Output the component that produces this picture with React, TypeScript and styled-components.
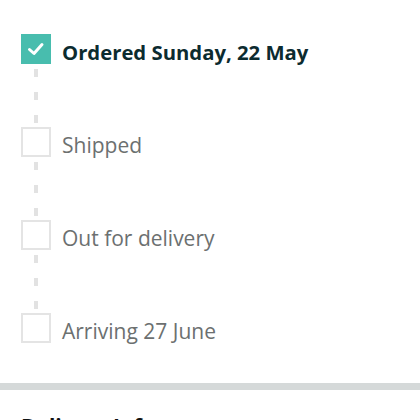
import styled, { createGlobalStyle } from "styled-components";

const GlobalStyle = createGlobalStyle`
  html, body {
    margin: 0;
    padding: 0;
    background: #ffffff;
    font-family: "Open Sans", "Noto Sans", Arial, sans-serif;
  }
`;

const Page = styled.div`
  width: 420px;
  height: 420px;
  overflow: hidden;
`;

const Timeline = styled.div`
  display: flex;
  flex-direction: column;
  padding: 34px 0 40px 21px;
`;

const Step = styled.div`
  display: flex;
  align-items: center;
  gap: 11px;
  height: 30px;
`;

const Box = styled.div<{ $done?: boolean }>`
  box-sizing: border-box;
  width: 30px;
  height: 30px;
  flex: none;
  display: flex;
  align-items: center;
  justify-content: center;
  background: ${(p) => (p.$done ? "#48bdae" : "#ffffff")};
  border: ${(p) => (p.$done ? "none" : "2px solid #e4e4e4")};
`;

const Label = styled.span<{ $done?: boolean }>`
  font-size: ${(p) => (p.$done ? "20.3px" : "21px")};
  font-weight: ${(p) => (p.$done ? 700 : 400)};
  color: ${(p) => (p.$done ? "#0c2b2f" : "#6c7070")};
  white-space: nowrap;
  margin-top: 6px;
`;

const Connector = styled.div`
  width: 4px;
  height: 54px;
  margin: 5px 0 4px 13px;
  background: repeating-linear-gradient(
    to bottom,
    #e2e2e2 0,
    #e2e2e2 8px,
    transparent 8px,
    transparent 23px
  );
`;

const Divider = styled.div`
  height: 7px;
  background: #d5d9d9;
`;

const SectionTitle = styled.h2`
  margin: 0;
  padding: 22px 0 0 21px;
  font-size: 21px;
  font-weight: 700;
  color: #0f1111;
`;

const Check = () => (
  <svg width="20" height="20" viewBox="0 0 20 20">
    <polyline
      points="3.5,10.5 8,14.5 16,5.5"
      fill="none"
      stroke="#ffffff"
      strokeWidth="3"
      strokeLinecap="round"
      strokeLinejoin="round"
    />
  </svg>
);

const steps = [
  { label: "Ordered Sunday, 22 May", done: true },
  { label: "Shipped", done: false },
  { label: "Out for delivery", done: false },
  { label: "Arriving 27 June", done: false },
];

export default function App() {
  return (
    <Page>
      <GlobalStyle />
      <Timeline>
        {steps.map((s, i) => (
          <div key={s.label}>
            {i > 0 && <Connector />}
            <Step>
              <Box $done={s.done}>{s.done && <Check />}</Box>
              <Label $done={s.done}>{s.label}</Label>
            </Step>
          </div>
        ))}
      </Timeline>
      <Divider />
      <SectionTitle>Delivery Info</SectionTitle>
    </Page>
  );
}
